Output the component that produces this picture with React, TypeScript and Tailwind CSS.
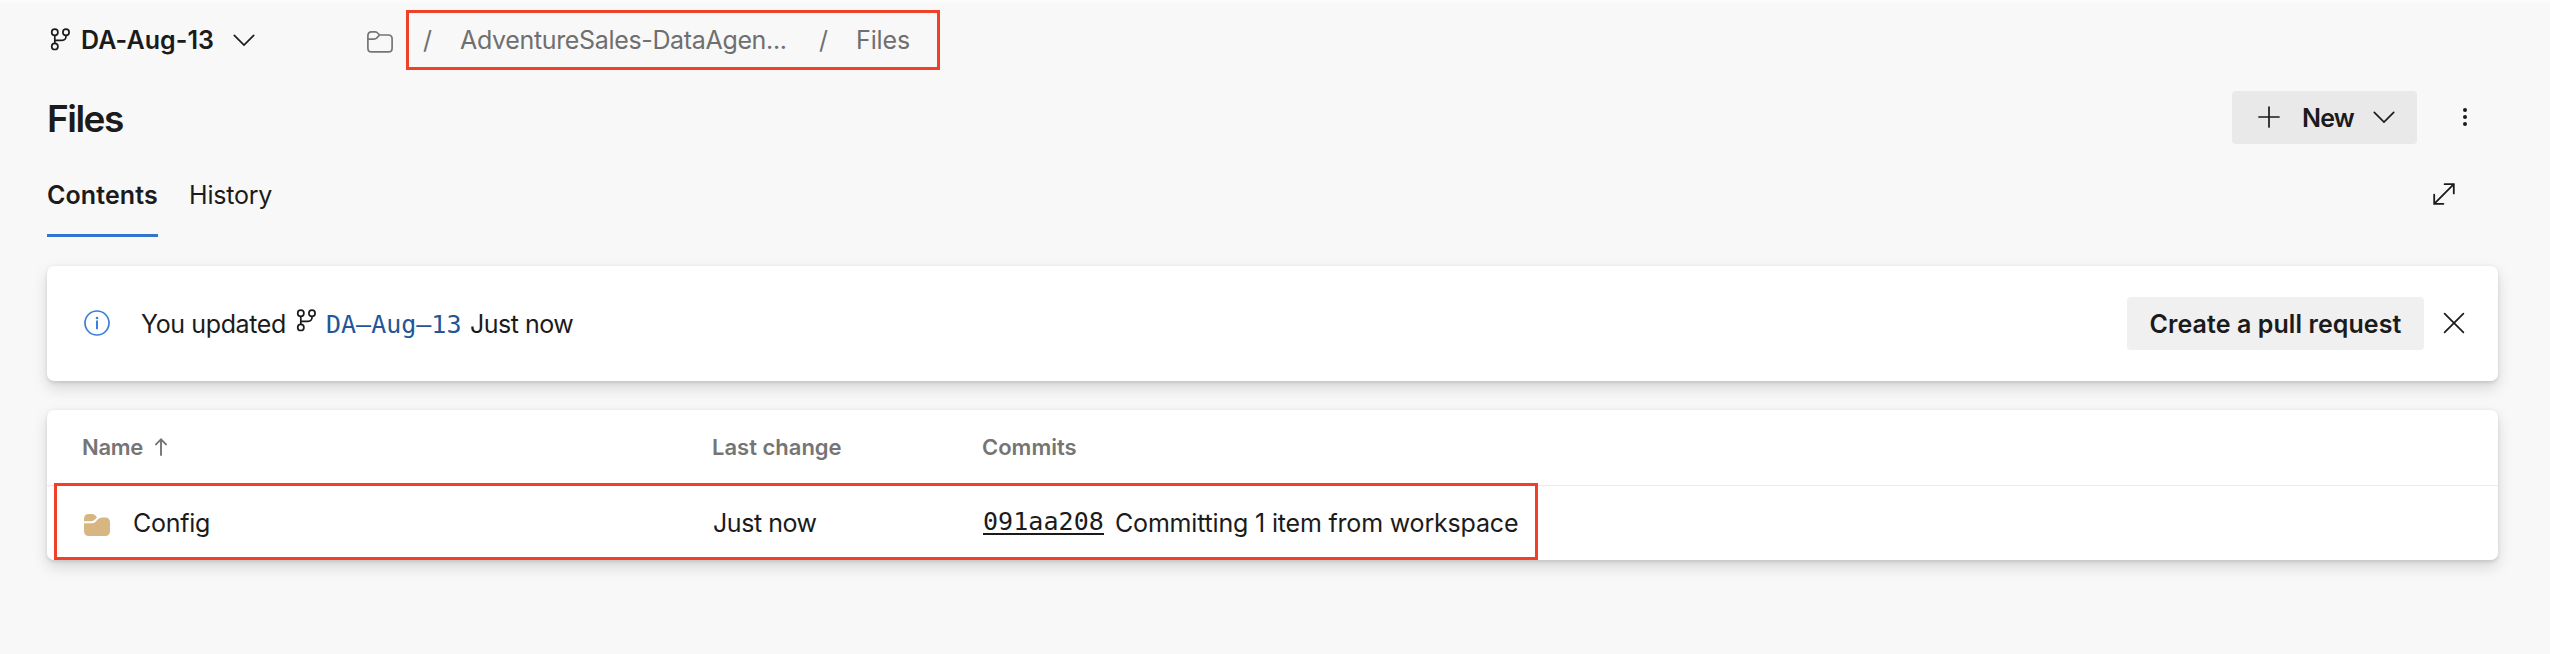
import type { ReactNode } from "react";

function BranchIcon({ className }: { className?: string }) {
  return (
    <svg width="22" height="24" viewBox="0 0 22 24" fill="none" stroke="#1b1b1b" strokeWidth="1.7" className={className}>
      <circle cx="4.8" cy="4.3" r="3.1" />
      <circle cx="16" cy="4.3" r="3.1" />
      <circle cx="4.8" cy="18.4" r="3.1" />
      <path d="M4.8 7.4V15.3M16 7.4V8.2Q16 12.3 12 12.3H4.8" />
    </svg>
  );
}

function ChevronDown({ className }: { className?: string }) {
  return (
    <svg width="22" height="13" viewBox="0 0 22 13" fill="none" stroke="#1b1b1b" strokeWidth="1.7" strokeLinecap="round" className={className}>
      <path d="M1.3 1.3 11 11 20.7 1.3" />
    </svg>
  );
}

function FolderOutline({ className }: { className?: string }) {
  return (
    <svg width="26" height="22" viewBox="0 0 26 22" fill="none" stroke="#757575" strokeWidth="1.7" className={className}>
      <path d="M.9 5V17.2Q.9 20.9 4.6 20.9H21.3Q25.1 20.9 25.1 17.2V7.8Q25.1 4 21.3 4H12.5L10.9 2.2Q9.8.9 8.2.9H4.6Q.9.9.9 4.8Z" />
      <path d="M.9 8.1H7.2Q8.6 8.1 9.6 7.2L12.6 4" />
    </svg>
  );
}

function FolderSolid({ className }: { className?: string }) {
  return (
    <svg width="26" height="22" viewBox="0 0 26 22" fill="#d7b682" className={className}>
      <path d="M0 7.2V5Q0 0 5 0H8.4Q10.2 0 11.4 1.5L13 3.4 10.3 6.1Q9.2 7.2 7.6 7.2Z" />
      <path d="M0 9.2H8Q9.9 9.2 11.3 7.9L14.2 4.9Q15.8 3.4 18 3.4H21Q26 3.4 26 8.4V17Q26 22 21 22H5Q0 22 0 17Z" />
    </svg>
  );
}

function Cell({ className, children }: { className: string; children: ReactNode }) {
  return <div className={`flex shrink-0 items-center ${className}`}>{children}</div>;
}

const card =
  "rounded-[7px] bg-white shadow-[0_6.4px_14.4px_rgba(0,0,0,0.132),0_1.2px_3.6px_rgba(0,0,0,0.108)]";

export default function App() {
  return (
    <div className="h-[654px] w-full overflow-hidden border-t-3 border-[#fbfbfb] bg-[#f8f8f8] pr-[52px] pl-[47px] font-['Inter',sans-serif] text-[25px] leading-none whitespace-nowrap text-[#1b1b1b]">
      <header className="flex h-[77px] items-center pb-[3px]">
        <Cell className="w-[320px]">
          <BranchIcon className="ml-[3px]" />
          <span className="ml-[9px] font-semibold tracking-[0.06px]">DA-Aug-13</span>
          <ChevronDown className="ml-[19px]" />
        </Cell>
        <FolderOutline className="mt-[4px]" />
        <nav className="ml-[13px] flex h-[60px] w-[534px] items-center border-3 border-[#ee4127] text-[#6f6f6f]">
          <span className="ml-[14px] w-[37px]">/</span>
          <span className="w-[359px] tracking-[-0.34px]">AdventureSales-DataAgen...</span>
          <span className="w-[37px]">/</span>
          <span className="tracking-[-0.1px]">Files</span>
        </nav>
      </header>

      <div className="flex h-[76px] items-center">
        <h1 className="text-[37px] font-semibold tracking-[-1.5px]">Files</h1>
        <button className="mr-[33px] mb-[2px] ml-auto flex h-[53px] w-[185px] items-center rounded-[4px] bg-[#e9e9e9]">
          <svg width="22" height="22" viewBox="0 0 22 22" fill="none" stroke="#1b1b1b" strokeWidth="1.7" strokeLinecap="round" className="mb-px ml-[26px]">
            <path d="M11 1V21M1 11H21" />
          </svg>
          <span className="mt-[2px] ml-[21px] w-[54px] font-semibold tracking-[-0.8px]">New</span>
          <ChevronDown className="ml-[18px]" />
        </button>
        <svg width="30" height="20" viewBox="0 0 30 20" fill="#1b1b1b" className="mr-[18px] mb-[2px]">
          <circle cx="15" cy="2.9" r="2" />
          <circle cx="15" cy="10" r="2" />
          <circle cx="15" cy="17.1" r="2" />
        </svg>
      </div>

      <div className="flex h-[81px] items-start">
        <div className="flex h-[81px] w-[111px] items-center border-b-3 border-[#3175d0] font-semibold tracking-[0.1px]">Contents</div>
        <div className="ml-[31px] flex h-[78px] items-center tracking-[-0.2px]">History</div>
        <svg width="22" height="22" viewBox="0 0 22 22" fill="none" stroke="#1b1b1b" strokeWidth="1.8" strokeLinecap="round" className="mt-[27px] mr-[43px] ml-auto">
          <path d="M1.2 20.8 20.8 1.2M11.6 1.2H20.8V10.4M1.2 11.6V20.8H10.4" />
        </svg>
      </div>

      <section className={`mt-[29px] flex h-[115px] items-center ${card}`}>
        <svg width="26" height="26" viewBox="0 0 26 26" fill="none" stroke="#3b7fd9" strokeWidth="1.7" className="mb-[2px] ml-[37px]">
          <circle cx="13" cy="13" r="12" />
          <path d="M13 11.2V18.4" strokeWidth="2" strokeLinecap="round" />
          <circle cx="13" cy="8" r="1.3" fill="#3b7fd9" stroke="none" />
        </svg>
        <span className="mt-px ml-[31px] w-[156px] tracking-[-0.38px]">You updated</span>
        <BranchIcon className="mb-[5px] -ml-[1px]" />
        <span className="mt-px ml-[8px] w-[144px] font-['DejaVu_Sans_Mono',monospace] text-[#245695]">DA–Aug–13</span>
        <span className="mt-px tracking-[-0.5px]">Just now</span>
        <button className="ml-auto flex h-[53px] w-[297px] items-center justify-center rounded-[4px] bg-[#f0f0f0] pt-px font-semibold tracking-[0.08px]">
          Create a pull request
        </button>
        <svg width="22" height="22" viewBox="0 0 22 22" fill="none" stroke="#1b1b1b" strokeWidth="1.7" strokeLinecap="round" className="mr-[33px] mb-[2px] ml-[19px]">
          <path d="M1.6 1.6 20.4 20.4M20.4 1.6 1.6 20.4" />
        </svg>
      </section>

      <section className={`mt-[29px] h-[150px] ${card}`}>
        <div className="flex h-[76px] items-center border-b border-[#eaeaea] pb-px pl-[35px] text-[22px] font-semibold text-[#757575]">
          <Cell className="w-[630px]">
            <span className="tracking-[-0.3px]">Name</span>
            <svg width="12" height="18" viewBox="0 0 12 18" fill="none" stroke="#757575" strokeWidth="1.9" strokeLinecap="round" className="ml-[12px]">
              <path d="M6 17V1.8M1 6.4 6 1.4 11 6.4" />
            </svg>
          </Cell>
          <Cell className="w-[270px]">Last change</Cell>
          <Cell className="w-[500px]">Commits</Cell>
        </div>
        <div className="relative flex h-[74px] items-center pl-[37px]">
          <Cell className="w-[629px]">
            <FolderSolid className="mt-[4px]" />
            <span className="ml-[23px] tracking-[-0.25px]">Config</span>
          </Cell>
          <Cell className="w-[270px] tracking-[-0.45px]">Just now</Cell>
          <a className="border-b-2 border-[#1b1b1b] font-['DejaVu_Sans_Mono',monospace] leading-[22px] tracking-[0.07px]">091aa208</a>
          <span className="ml-[11px] tracking-[-0.18px]">Committing 1 item from workspace</span>
          <div className="absolute -top-[3px] left-[7px] h-[77px] w-[1484px] border-3 border-[#ee4127]" />
        </div>
      </section>
    </div>
  );
}
